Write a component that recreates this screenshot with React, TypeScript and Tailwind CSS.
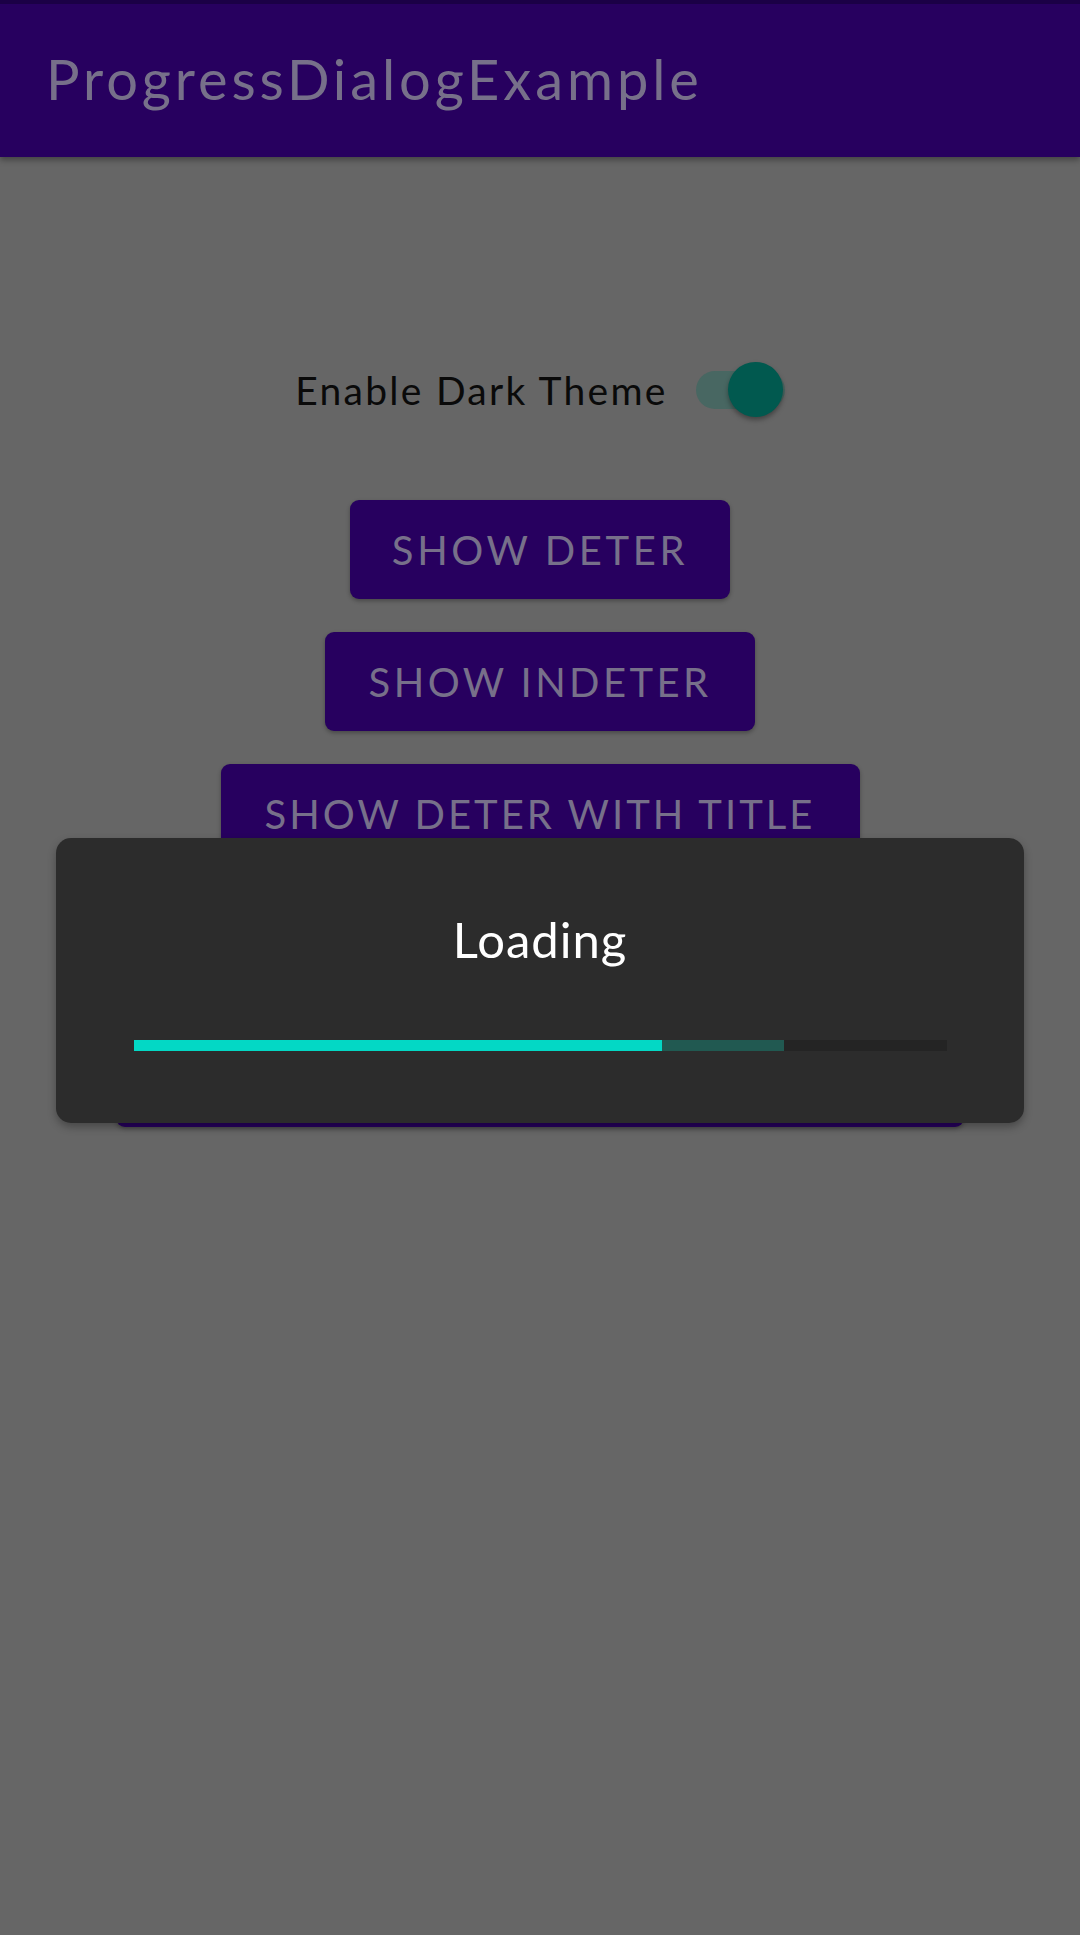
import React from 'react';

const font = { fontFamily: 'Lato, "Noto Sans", "Liberation Sans", sans-serif' };

const buttons = [
  { label: 'SHOW DETER', w: 'w-[380px]', track: 'tracking-[0.09em]' },
  { label: 'SHOW INDETER', w: 'w-[430px]', track: 'tracking-[0.085em]' },
  { label: 'SHOW DETER WITH TITLE', w: 'w-[639px]', track: 'tracking-[0.075em]' },
  { label: 'SHOW INDETER WITH TITLE', w: 'w-[690px]', track: 'tracking-[0.075em]' },
  { label: 'SHOW DETER WITH MESSAGE', w: 'w-[848px]', track: 'tracking-[0.075em]' },
];

export default function App() {
  return (
    <div className="relative w-[1080px] h-[1935px] bg-[#666666] overflow-hidden" style={font}>
      {/* Toolbar */}
      <header className="relative h-[157px] bg-[#27005f] shadow-[0_3px_6px_rgba(0,0,0,0.35)]">
        <div className="h-[4px] bg-[#1b0046]" />
        <h1 className="pl-[46px] pt-[43px] text-[56px] leading-[64px] tracking-[0.07em] text-[#77708a] whitespace-nowrap">
          ProgressDialogExample
        </h1>
      </header>

      <main className="flex flex-col items-center">
        {/* Dark theme switch */}
        <div className="mt-[203px] h-[60px] flex items-center gap-[28px]">
          <span className="text-[39px] tracking-[0.058em] text-[#0a0a0a] whitespace-nowrap">Enable Dark Theme</span>
          <div className="relative w-[89px] h-[38px]">
            <div className="absolute inset-0 rounded-full bg-[#486762]" />
            <div className="absolute right-[2px] top-[-9px] w-[55px] h-[55px] rounded-full bg-[#01594f] shadow-[0_3px_5px_rgba(0,0,0,0.35)]" />
          </div>
        </div>

        {/* Buttons */}
        <div className="mt-[80px] flex flex-col items-center gap-[33px]">
          {buttons.map((b) => (
            <button
              key={b.label}
              className={`${b.w} ${b.track} h-[99px] rounded-[9px] bg-[#27005f] text-[40px] text-[#77708a] whitespace-nowrap shadow-[0_2px_4px_rgba(0,0,0,0.3)]`}
            >
              {b.label}
            </button>
          ))}
        </div>
      </main>

      {/* Progress dialog */}
      <div className="absolute left-[56px] top-[838px] w-[968px] h-[285px] rounded-[15px] bg-[#2c2c2c] shadow-[0_4px_8px_rgba(0,0,0,0.3)] px-[78px]">
        <p className="mt-[71px] text-center text-[49px] leading-[60px] tracking-[0.02em] text-white">Loading</p>
        <div className="mt-[71px] relative h-[11px] w-[813px] bg-[#242424]">
          <div className="absolute left-0 top-0 h-full w-[650px] bg-[#215951]" />
          <div className="absolute left-0 top-0 h-full w-[528px] bg-[#03d8c5]" />
        </div>
      </div>
    </div>
  );
}
